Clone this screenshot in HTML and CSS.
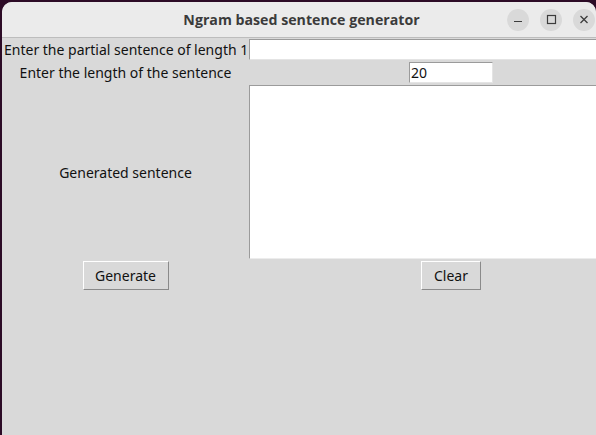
FILE: index.html
```html
<!DOCTYPE html>
<html>
<head>
<meta charset="utf-8">
<link rel="stylesheet" href="styles.css">
</head>
<body>
<div class="window">
  <div class="titlebar">
    <div class="title">Ngram based sentence generator</div>
    <div class="controls">
      <span class="ctl"><svg width="22" height="22" viewBox="0 0 22 22"><path d="M7 12.5h8" stroke="#3c3c3c" stroke-width="1.2"/></svg></span>
      <span class="ctl"><svg width="22" height="22" viewBox="0 0 22 22"><rect x="7.5" y="6.5" width="8" height="8" fill="none" stroke="#3c3c3c" stroke-width="1.2"/></svg></span>
      <span class="ctl"><svg width="22" height="22" viewBox="0 0 22 22"><path d="M7.5 7l7 7M14.5 7l-7 7" stroke="#3c3c3c" stroke-width="1.3"/></svg></span>
    </div>
  </div>
  <div class="content">
    <div class="label l1">Enter the partial sentence of length 1</div>
    <div class="cell"><div class="entry wide"></div></div>
    <div class="label">Enter the length of the sentence</div>
    <div class="cell center"><div class="entry short">20</div></div>
    <div class="label">Generated sentence</div>
    <div class="cell top"><div class="textbox"></div></div>
    <div class="cell center"><button class="btn gen">Generate</button></div>
    <div class="cell center"><button class="btn clr">Clear</button></div>
  </div>
</div>
</body>
</html>
```
FILE: styles.css
```css
html, body {
  margin: 0;
  padding: 0;
  width: 596px;
  height: 435px;
  overflow: hidden;
  background: #2c0b26;
}
.window {
  margin: 2px 0 0 2px;
  width: 594px;
  height: 433px;
  background: #d9d9d9;
  border-radius: 10px 10px 0 0;
  overflow: hidden;
  font-family: "Noto Sans", "DejaVu Sans", sans-serif;
  font-size: 14px;
  color: #111;
}
.titlebar {
  height: 35px;
  background: #ebebeb;
  border-bottom: 1px solid #bdbdbd;
  display: flex;
  align-items: center;
}
.title {
  flex: 1;
  text-align: center;
  font-family: "Open Sans", "Noto Sans", sans-serif;
  font-weight: bold;
  font-size: 14.2px;
  color: #3b3b3b;
  padding-left: 94px;
}
.controls {
  display: flex;
  gap: 11px;
  padding-right: 1px;
}
.ctl {
  width: 22px;
  height: 22px;
  border-radius: 50%;
  background: #d9d9d9;
  display: flex;
}
.content {
  display: grid;
  grid-template-columns: 247px 404px;
  grid-template-rows: 22px 25px 174px 33px;
  overflow: hidden;
}
.label {
  display: flex;
  align-items: center;
  justify-content: center;
  white-space: nowrap;
}
.l1 { justify-content: flex-start; padding-left: 2px; }
.cell { display: flex; align-items: center; }
.center { justify-content: center; }
.top { align-items: flex-start; }
.entry {
  box-sizing: border-box;
  background: #fff;
  border-top: 1px solid #9b9b9b;
  border-left: 1px solid #9b9b9b;
  border-bottom: 1px solid #e4e4e4;
  border-right: 1px solid #e4e4e4;
  height: 21px;
  line-height: 19px;
  padding-left: 1px;
}
.wide { width: 404px; }
.short { width: 84px; }
.textbox {
  box-sizing: border-box;
  width: 404px;
  height: 174px;
  background: #fff;
  border-top: 1px solid #9b9b9b;
  border-left: 1px solid #9b9b9b;
  border-bottom: 1px solid #ececec;
}
.btn {
  font-family: "Noto Sans", "DejaVu Sans", sans-serif;
  font-size: 14px;
  color: #111;
  background: #d9d9d9;
  border-top: 1px solid #fff;
  border-left: 1px solid #fff;
  border-bottom: 1px solid #8a8a8a;
  border-right: 1px solid #8a8a8a;
  height: 29px;
  padding: 0;
  margin: 0;
}
.gen { width: 86px; }
.clr { width: 60px; }
```
